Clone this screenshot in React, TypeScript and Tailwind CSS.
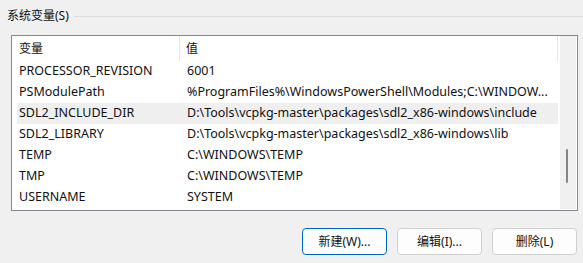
import React from "react";

const rows: [string, string][] = [
  ["PROCESSOR_REVISION", "6001"],
  ["PSModulePath", "%ProgramFiles%\\WindowsPowerShell\\Modules;C:\\WINDOW..."],
  ["SDL2_INCLUDE_DIR", "D:\\Tools\\vcpkg-master\\packages\\sdl2_x86-windows\\include"],
  ["SDL2_LIBRARY", "D:\\Tools\\vcpkg-master\\packages\\sdl2_x86-windows\\lib"],
  ["TEMP", "C:\\WINDOWS\\TEMP"],
  ["TMP", "C:\\WINDOWS\\TEMP"],
  ["USERNAME", "SYSTEM"],
];

export default function App() {
  return (
    <div
      className="w-[583px] h-[263px] bg-[#f0f0f0] overflow-hidden text-[12px] text-[#111]"
      style={{ fontFamily: '"Noto Sans", "Noto Sans CJK SC", sans-serif' }}
    >
      <div className="flex items-center pt-[8px] pl-[7px] h-[24px]">
        <span className="leading-[16px]">系统变量(S)</span>
        <div className="flex-1 h-px bg-[#dcdcdc] ml-[5px]" />
      </div>
      <div className="mt-[11px] ml-[11px] w-[567px] h-[176px] border border-[#828790] bg-white flex">
        <div className="flex-1 flex flex-col">
          <div className="flex h-[25px] items-center">
            <div className="w-[168px] h-full flex items-center pl-[7px] border-r border-[#e5e5e5]">变量</div>
            <div className="w-[378px] h-full flex items-center pl-[6px] border-r border-[#e5e5e5]">值</div>
          </div>
          {rows.map(([k, v]) => (
            <div
              key={k}
              className={
                "flex h-[21px] items-center ml-[5px] w-[541px] whitespace-nowrap text-[12.5px] " +
                (k === "SDL2_INCLUDE_DIR" ? "bg-[#efefef]" : "")
              }
            >
              <div className="w-[170px] pl-[2px]">{k}</div>
              <div className="flex-1 overflow-hidden">{v}</div>
            </div>
          ))}
        </div>
        <div className="w-[16px] bg-[#f0f0f0] mr-px mb-px relative">
          <div className="absolute left-[6px] top-[113px] w-[2px] h-[34px] rounded-full bg-[#858585]" />
        </div>
      </div>
      <div className="flex justify-end gap-[10px] pr-[6px] mt-[17px]">
        <button className="w-[85px] h-[27px] rounded-[4px] border border-[#0067c0] bg-[#fdfdfd] text-[12px]">
          新建(W)...
        </button>
        <button className="w-[85px] h-[27px] rounded-[4px] border border-[#d0d0d0] bg-[#fdfdfd] text-[12px]">
          编辑(I)...
        </button>
        <button className="w-[85px] h-[27px] rounded-[4px] border border-[#d0d0d0] bg-[#fdfdfd] text-[12px]">
          删除(L)
        </button>
      </div>
    </div>
  );
}
